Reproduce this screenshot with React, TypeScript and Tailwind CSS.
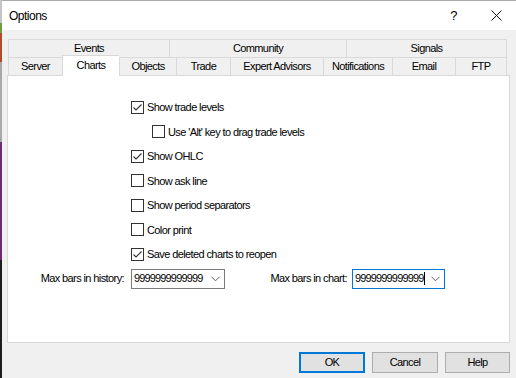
import React from "react";

function Check({ checked }: { checked: boolean }) {
  return (
    <div className="w-[13px] h-[13px] border border-[#333333] bg-white flex items-center justify-center shrink-0">
      {checked && (
        <svg width="11" height="11" viewBox="0 0 11 11">
          <path d="M1.5 5.5 L4 8 L9.5 2.5" fill="none" stroke="#333333" strokeWidth="1.1" />
        </svg>
      )}
    </div>
  );
}

function Row({ label, checked, indent }: { label: string; checked: boolean; indent?: boolean }) {
  return (
    <div className={`h-[24.5px] flex items-center gap-[3px] ${indent ? "pl-[144px]" : "pl-[123px]"}`}>
      <Check checked={checked} />
      <span>{label}</span>
    </div>
  );
}

function Chevron() {
  return (
    <svg width="9" height="6" viewBox="0 0 9 6">
      <path d="M0.5 0.8 L4.5 4.8 L8.5 0.8" fill="none" stroke="#606060" strokeWidth="1" />
    </svg>
  );
}

function Combo({ w, focused }: { w: string; focused?: boolean }) {
  return (
    <div
      className={`${w} h-[20px] bg-white flex items-center border ${
        focused ? "border-[#0078d7]" : "border-[#7a7a7a]"
      }`}
    >
      <span className="pl-[2px] flex items-center tracking-[-0.85px]">
        9999999999999
        {focused && <span className="inline-block w-px h-[13px] bg-black ml-[1px]" />}
      </span>
      <span className="ml-auto mr-[4px] flex items-center">
        <Chevron />
      </span>
    </div>
  );
}

const row2 = [
  { t: "Server", w: "w-[54px]" },
  { t: "Charts", w: "w-[57px]", sel: true },
  { t: "Objects", w: "w-[57px]" },
  { t: "Trade", w: "w-[54px]" },
  { t: "Expert Advisors", w: "w-[93px]" },
  { t: "Notifications", w: "w-[69px]" },
  { t: "Email", w: "w-[63px]" },
  { t: "FTP", w: "w-[52px]" },
];

export default function App() {
  return (
    <div className="w-[516px] h-[378px] flex overflow-hidden font-['Liberation_Sans',Arial,sans-serif] text-[11px] tracking-[-0.6px] text-black">
      <div className="w-[2px] flex flex-col shrink-0">
        <div className="h-[23px] bg-[#c4c4c4]" />
        <div className="h-[10px] bg-[#6c9f3c]" />
        <div className="h-[29px] bg-[#b24a2c]" />
        <div className="h-[80px] bg-[#a8a8a8]" />
        <div className="h-[118px] bg-[#6d2b72]" />
        <div className="flex-1 bg-[#1e1e1e]" />
      </div>
      <div className="flex-1 flex flex-col bg-[#f0f0f0]">
        <div className="h-[30px] bg-white border-t border-[#aaaaaa] flex items-center pl-[7px] shrink-0">
          <span className="text-[12px] tracking-[-0.5px]">Options</span>
          <span className="ml-auto text-[13px] mr-[34px]">?</span>
          <svg width="11" height="11" viewBox="0 0 11 11" className="mr-[14px]">
            <path d="M0.5 0.5 L10.5 10.5 M10.5 0.5 L0.5 10.5" stroke="#111" strokeWidth="1" />
          </svg>
        </div>
        <div className="ml-[5px] w-[503px] mt-[9px] flex flex-col">
          <div className="ml-[1px] w-[499px] flex h-[18px]">
            <div className="w-[161px] border-t border-l border-[#d9d9d9] flex items-center justify-center">Events</div>
            <div className="w-[177px] border-t border-l border-[#d9d9d9] flex items-center justify-center">Community</div>
            <div className="w-[161px] border-t border-l border-r border-[#d9d9d9] flex items-center justify-center">Signals</div>
          </div>
          <div className="ml-[1px] w-[499px] flex h-[18px] relative z-10">
            {row2.map((tb, i) =>
              tb.sel ? (
                <div
                  key={tb.t}
                  className={`${tb.w} h-[21px] -mt-[2px] bg-white border-t border-l border-[#d9d9d9] flex items-center justify-center pb-[2px]`}
                >
                  {tb.t}
                </div>
              ) : (
                <div
                  key={tb.t}
                  className={`${tb.w} border-t border-l ${i === row2.length - 1 ? "border-r" : ""} border-[#d9d9d9] flex items-center justify-center`}
                >
                  {tb.t}
                </div>
              )
            )}
          </div>
          <div className="h-[268px] bg-white border border-[#d9d9d9] flex flex-col pt-[19px]">
            <Row label="Show trade levels" checked />
            <Row label="Use 'Alt' key to drag trade levels" checked={false} indent />
            <Row label="Show OHLC" checked />
            <Row label="Show ask line" checked={false} />
            <Row label="Show period separators" checked={false} />
            <Row label="Color print" checked={false} />
            <Row label="Save deleted charts to reopen" checked />
            <div className="flex items-center mt-[2px]">
              <div className="w-[123px] text-right pr-[7px]">Max bars in history:</div>
              <Combo w="w-[94px]" />
              <div className="w-[127px] text-right pr-[5px]">Max bars in chart:</div>
              <Combo w="w-[93px]" focused />
            </div>
          </div>
        </div>
        <div className="flex justify-end gap-[7px] mt-[9px] mr-[6px]">
          <button className="w-[66px] h-[21px] bg-[#e1e1e1] border-2 border-[#0078d7] flex items-center justify-center">OK</button>
          <button className="w-[66px] h-[21px] bg-[#e1e1e1] border border-[#adadad] flex items-center justify-center">Cancel</button>
          <button className="w-[65px] h-[21px] bg-[#e1e1e1] border border-[#adadad] flex items-center justify-center">Help</button>
        </div>
      </div>
    </div>
  );
}
